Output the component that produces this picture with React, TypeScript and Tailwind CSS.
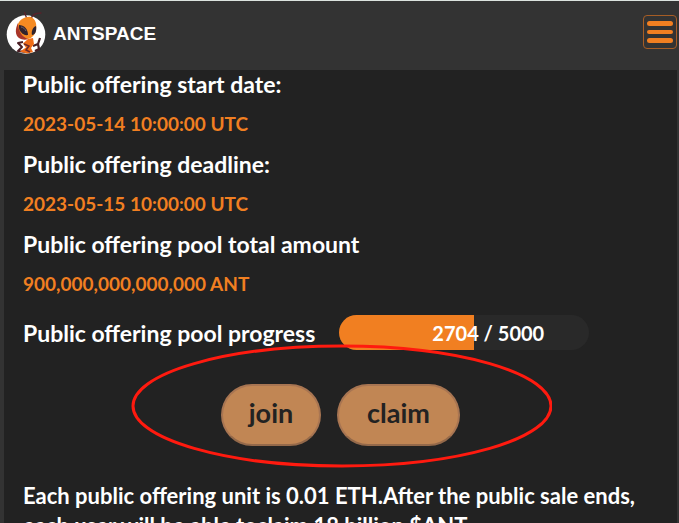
const details = [
  { label: 'Public offering start date:', value: '2023-05-14 10:00:00 UTC' },
  { label: 'Public offering deadline:', value: '2023-05-15 10:00:00 UTC' },
  { label: 'Public offering pool total amount', value: '900,000,000,000,000 ANT' },
];

function AntLogo() {
  return (
    <svg viewBox="0 0 40 44" className="h-11 w-10 shrink-0" aria-hidden="true">
      <circle cx="20" cy="24.5" r="19.3" fill="#fff" />
      <path d="M21 9L18.500 2.500M25 9C26 5 30 3 35 3" fill="none" stroke="#58222a" strokeWidth="1.300" strokeLinecap="round" />
      <path d="M17 32l-5 1 4 4-4 4 8 1" fill="none" stroke="#4a1f25" strokeWidth="2" strokeLinejoin="round" />
      <path d="M27 36l5-2 2-6M32 34l1 5-4 2" fill="none" stroke="#4a1f25" strokeWidth="2.200" strokeLinejoin="round" />
      <path d="M22 29l5-1 1 6-3 4 2 4-6 1.500-7-2 6-4-3-4z" fill="#f06c18" />
      <path d="M18 34l5 2-3 4 4 2" fill="none" stroke="#6b2928" strokeWidth="1.500" />
      <path d="M12 14c2-5 8-8 13-7 5 2 6 8 5 13-1 5-4 8-8 9-5 0-9-3-10-7-1-3-1-6 0-8z" fill="#f58a22" />
      <path d="M12 13c-3 6-3 12 1 15 3 2 7 2 9 1-6-2-10-8-10-16z" fill="#a93629" />
      <path d="M13 15c5 0 9 4 9 10-5 1-10-4-9-10z" fill="#30232d" />
      <path d="M30 16c1 5-1 9-4 9-1-4 1-8 4-9z" fill="#30232d" />
      <path d="M15 17c2 0 4 2 5 4" fill="none" stroke="#74636b" strokeWidth="1" />
    </svg>
  );
}

function MenuButton() {
  return (
    <button
      type="button"
      aria-label="Open menu"
      className="flex h-[34px] w-[34px] flex-col items-center justify-center gap-1 rounded-[4px] border border-[#a65d25]"
    >
      <span className="h-[5px] w-[26px] rounded-full bg-[#f17f21]" />
      <span className="h-[4px] w-[26px] rounded-full bg-[#f17f21]" />
      <span className="h-[5px] w-[26px] rounded-full bg-[#f17f21]" />
    </button>
  );
}

function Progress({ current, total }: { current: number; total: number }) {
  return (
    <div
      role="progressbar"
      aria-label="Public offering pool progress"
      aria-valuenow={current}
      aria-valuemin={0}
      aria-valuemax={total}
      className="grid h-[35px] w-[250px] items-center overflow-hidden rounded-full bg-[#292929] text-[20px]"
    >
      <div
        className="col-start-1 row-start-1 h-full bg-[#f17f21]"
        style={{ width: `${(current / total) * 100}%` }}
      />
      <span className="col-start-1 row-start-1 pl-12 text-center">
        {current} / {total}
      </span>
    </div>
  );
}

const actionClass =
  'h-[62px] rounded-full border-2 border-[#a87552] border-b-[#94694a] bg-[#c18654] pb-1 text-[27px] font-bold leading-8 text-[#222]';

export default function App() {
  return (
    <div className="flex h-screen flex-col overflow-hidden border-t border-[#dce3df] bg-[#333] font-['Lato','Noto_Sans',sans-serif] text-white">
      <header className="flex h-[69px] shrink-0 items-start justify-between pl-[6px] pr-[2px]">
        <div className="flex items-center gap-[7px] pt-[9px]">
          <AntLogo />
          <span className="pt-1 font-['Liberation_Sans',Arial,sans-serif] text-[19px] font-bold">ANTSPACE</span>
        </div>
        <div className="pt-[14px]">
          <MenuButton />
        </div>
      </header>

      <main className="ml-1 mr-[2px] shrink-0 bg-[#222] px-[19px] pb-8 text-[23px] font-bold leading-7">
        <dl className="grid gap-3">
          {details.map(({ label, value }) => (
            <div key={label} className="grid gap-3">
              <dt>{label}</dt>
              <dd className="text-[19px] text-[#f17f21]">{value}</dd>
            </div>
          ))}
        </dl>

        <div className="mt-[17px] flex items-center gap-6">
          <span>Public offering pool progress</span>
          <Progress current={2704} total={5000} />
        </div>

        <div className="relative mt-[34px] flex justify-center gap-4">
          <button type="button" className={`${actionClass} w-[100px]`}>join</button>
          <button type="button" className={`${actionClass} w-[123px]`}>claim</button>
          <svg
            viewBox="0 0 422 124"
            className="pointer-events-none absolute -top-10 left-1/2 h-[124px] w-[422px] -translate-x-1/2"
            aria-hidden="true"
          >
            <ellipse cx="212" cy="62" rx="209" ry="60" fill="none" stroke="#ff1a0f" strokeWidth="3" />
          </svg>
        </div>

        <p className="mt-[35px] text-[22px] leading-[30px]">
          Each public offering unit is 0.01 ETH.After the public sale ends, each user will be able toclaim 18 billion $ANT
        </p>
      </main>
    </div>
  );
}
